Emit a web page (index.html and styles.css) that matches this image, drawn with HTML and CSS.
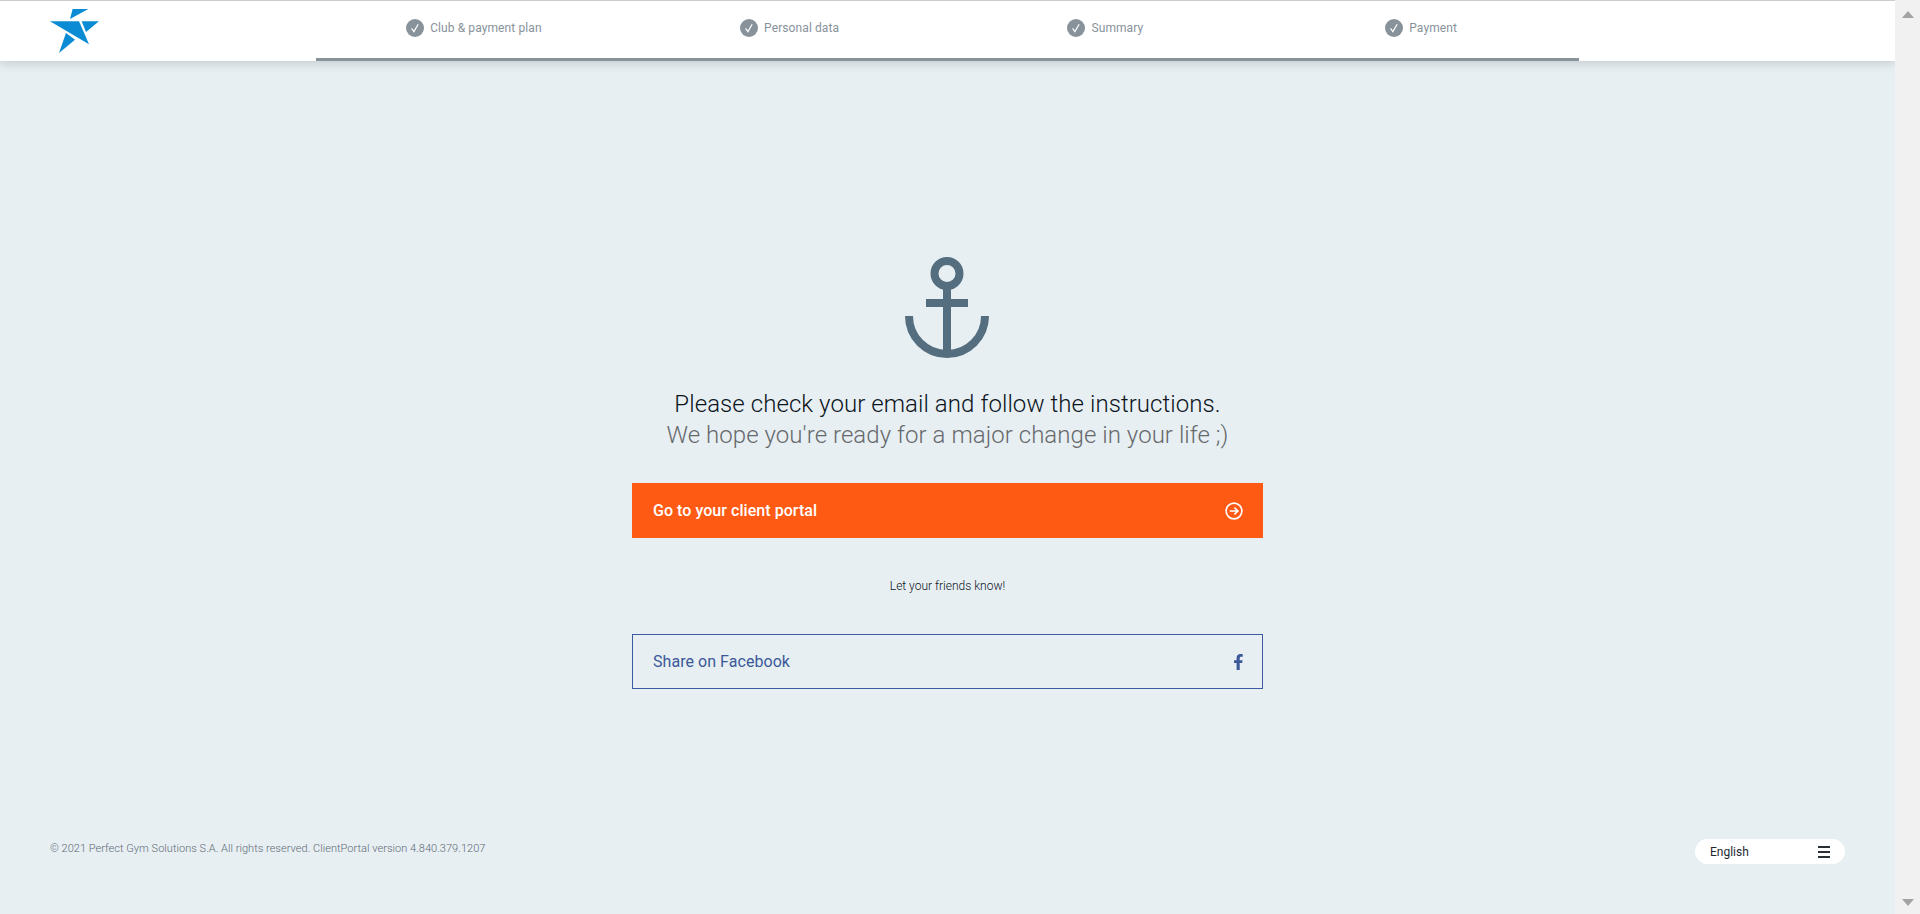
FILE: index.html
```html
<!DOCTYPE html>
<html lang="en">
<head>
    <meta charset="UTF-8">
    <meta name="viewport" content="width=device-width, initial-scale=1.0">
    <title>Client Portal - Registration complete</title>
    <link rel="stylesheet" href="styles.css">
</head>
<body>
    <div class="page">
        <header class="topbar">
            <div class="logo-box">
                <svg class="logo" viewBox="60 28 147 132">
                    <polygon points="128,28 175,28 120,58"/>
                    <polygon points="60,65 147,65 177,134"/>
                    <polygon points="155,65 207,65 168,97"/>
                    <polygon points="108,100 135,120 87,160"/>
                </svg>
            </div>
            <nav class="steps">
                <div class="step">
                    <svg class="step-icon" viewBox="0 0 18 18"><circle cx="9" cy="9" r="9"/><path d="M5.6 9.4l2.3 3.2 4.300-7.400"/></svg>
                    <span>Club &amp; payment plan</span>
                </div>
                <div class="step">
                    <svg class="step-icon" viewBox="0 0 18 18"><circle cx="9" cy="9" r="9"/><path d="M5.6 9.4l2.3 3.2 4.300-7.400"/></svg>
                    <span>Personal data</span>
                </div>
                <div class="step">
                    <svg class="step-icon" viewBox="0 0 18 18"><circle cx="9" cy="9" r="9"/><path d="M5.6 9.4l2.3 3.2 4.300-7.400"/></svg>
                    <span>Summary</span>
                </div>
                <div class="step">
                    <svg class="step-icon" viewBox="0 0 18 18"><circle cx="9" cy="9" r="9"/><path d="M5.6 9.4l2.3 3.2 4.300-7.400"/></svg>
                    <span>Payment</span>
                </div>
            </nav>
        </header>

        <main class="content">
            <svg class="anchor" viewBox="0 0 84 101">
                <circle cx="42" cy="16.5" r="12.5"/>
                <path d="M42 29V98"/>
                <path d="M21 46H63"/>
                <path d="M4 59A38 38 0 0 0 80 59"/>
            </svg>
            <p class="message">Please check your email and follow the instructions.</p>
            <p class="message message-sub">We hope you're ready for a major change in your life ;)</p>

            <a class="btn btn-portal" href="#">
                <span>Go to your client portal</span>
                <svg class="btn-icon" viewBox="0 0 16 16"><circle cx="8" cy="8" r="7"/><path d="M4.2 8H11.4M8.4 5l3 3-3 3"/></svg>
            </a>

            <p class="friends">Let your friends know!</p>

            <a class="btn btn-share" href="#">
                <span>Share on Facebook</span>
                <svg class="fb-icon" viewBox="0 0 9 16"><path d="M2.6 16V9H0V6.2h2.6V4.1C2.6 1.5 4.1 0 6.500 0c1 0 1.900.1 2.200.1v2.600H7.200C6 2.700 5.700 3.300 5.700 4.200v2h2.900L8.200 9H5.700v7z"/></svg>
            </a>
        </main>

        <footer class="footer">
            <p class="copyright">© 2021 Perfect Gym Solutions S.A. All rights reserved. ClientPortal version 4.840.379.1207</p>
            <div class="lang">
                <span>English</span>
                <div class="burger"><i></i><i></i><i></i></div>
            </div>
        </footer>
    </div>

    <div class="scrollbar">
        <div class="arrow-up"></div>
        <div class="arrow-down"></div>
    </div>
</body>
</html>
```
FILE: styles.css
```css
* {
    margin: 0;
    padding: 0;
    box-sizing: border-box;
}

html {
    height: 914px;
    overflow: hidden;
}

body {
    background: #e7eff3;
    height: 914px;
    display: flex;
    font-family: Roboto, sans-serif;
    overflow: hidden;
}

.page {
    flex: 1;
    display: flex;
    flex-direction: column;
    min-width: 0;
}

/* top bar */
.topbar {
    display: flex;
    height: 61px;
    background: #fff;
    border-top: 1px solid #ccc;
    box-shadow: 0 2px 10px rgba(0, 0, 0, 0.16);
}

.logo-box {
    width: 316px;
    padding: 8px 0 0 50px;
}

.logo {
    display: block;
    width: 49px;
    height: 44px;
    fill: #0a8bd3;
}

.steps {
    width: 1263px;
    display: flex;
    border-bottom: 3px solid #87929b;
}

.step {
    flex: 1;
    display: flex;
    justify-content: center;
    align-items: center;
    gap: 6px;
    padding-bottom: 3px;
    color: #87929b;
    font-size: 12px;
    letter-spacing: 0.1px;
}

.step-icon {
    width: 18px;
    height: 18px;
    fill: #87929b;
}

.step-icon path {
    fill: none;
    stroke: #fff;
    stroke-width: 1.2;
}

/* middle part */
.content {
    flex: 1;
    display: flex;
    flex-direction: column;
    align-items: center;
    padding-top: 196px;
}

.anchor {
    width: 84px;
    height: 101px;
    margin: 0 0 31px -1px;
    fill: none;
    stroke: #546e7f;
    stroke-width: 8;
}

.message {
    font-size: 24px;
    font-weight: 300;
    line-height: 31px;
    letter-spacing: 0.07px;
    color: #0c141c;
}

.message-sub {
    letter-spacing: 0.05px;
    color: #66696c;
}

.btn {
    width: 631px;
    height: 55px;
    display: flex;
    justify-content: space-between;
    align-items: center;
    padding: 0 20px 0 21px;
    font-size: 16px;
    letter-spacing: 0.05px;
    text-decoration: none;
}

.btn-portal {
    margin-top: 32px;
    background: #ff5a14;
    color: #fff;
    font-weight: 500;
}

.btn-icon {
    width: 18px;
    height: 18px;
    fill: none;
    stroke: #fff;
    stroke-width: 1.500;
}

.friends {
    margin: 40px 0;
    font-size: 12px;
    font-weight: 300;
    line-height: 16px;
    color: #0c141c;
}

.btn-share {
    border: 1px solid #3b5aa0;
    color: #3b5998;
    padding: 0 19px 0 20px;
}

.fb-icon {
    width: 9px;
    height: 16px;
    fill: #3b5998;
}

/* footer */
.footer {
    display: flex;
    justify-content: space-between;
    align-items: flex-start;
    height: 84px;
    padding: 0 50px;
}

.copyright {
    padding-top: 12px;
    font-size: 11px;
    font-weight: 300;
    letter-spacing: 0.03px;
    color: #5e6a73;
}

.lang {
    width: 150px;
    height: 25px;
    margin-top: 9px;
    display: flex;
    justify-content: space-between;
    align-items: center;
    padding: 0 15px;
    background: #fff;
    border-radius: 13px;
    font-size: 12px;
    color: #1d2730;
}

.burger i {
    display: block;
    width: 12px;
    height: 2px;
    margin: 3px 0;
    background: #2a2f35;
}

/* scrollbar */
.scrollbar {
    width: 25px;
    flex-shrink: 0;
    display: flex;
    flex-direction: column;
    justify-content: space-between;
    align-items: center;
    padding: 11px 0 8px;
    background: #f1f1f1;
}

.arrow-up {
    border: 6px solid transparent;
    border-top: 0;
    border-bottom: 7px solid #a3a3a3;
}

.arrow-down {
    border: 6px solid transparent;
    border-bottom: 0;
    border-top: 7px solid #a3a3a3;
}
```
